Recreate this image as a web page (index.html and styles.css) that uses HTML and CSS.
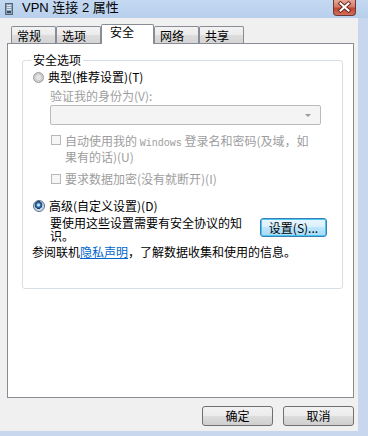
FILE: index.html
```html
<!DOCTYPE html>
<html lang="zh-CN">
<head>
<meta charset="utf-8">
<title>VPN 连接 2 属性</title>
<link rel="stylesheet" href="styles.css">
</head>
<body>
<div class="window">
  <div class="titlebar">
    <span class="appicon">
      <svg width="8" height="12" viewBox="0 0 8 12"><rect x="0.5" y="0.5" width="7" height="11" fill="#8fa3b8" stroke="#56677a"/><rect x="2" y="2" width="4" height="1" fill="#dfe8f1"/><rect x="2" y="4" width="4" height="1" fill="#dfe8f1"/><rect x="2" y="6" width="4" height="1" fill="#dfe8f1"/><rect x="2" y="8" width="4" height="2" fill="#3d4d5e"/></svg>
    </span>
    <span class="title">VPN 连接 2 属性</span>
    <span class="close">
      <svg width="23" height="16" viewBox="0 0 23 16"><path d="M7.5 4.5 L15.5 11.5 M15.5 4.5 L7.5 11.5" stroke="#6b2a22" stroke-width="4" stroke-linecap="square"/><path d="M7.5 4.5 L15.5 11.5 M15.5 4.5 L7.5 11.5" stroke="#ffffff" stroke-width="2" stroke-linecap="square"/></svg>
    </span>
  </div>
  <div class="client">
    <div class="tabs">
      <div class="tab">常规</div>
      <div class="tab">选项</div>
      <div class="tab active">安全</div>
      <div class="tab">网络</div>
      <div class="tab">共享</div>
    </div>
    <div class="panel">
      <fieldset class="group">
        <legend>安全选项</legend>
        <div class="opt first"><span class="radio"></span><span>典型(推荐设置)(T)</span></div>
        <div class="sub">
          <div class="lbl dis">验证我的身份为(V):</div>
          <div class="select"><span class="arrow"></span></div>
          <div class="chk dis c1"><span class="box"></span><span class="two">自动使用我的 <span class="mono">Windows</span> 登录名和密码(及域，如<br>果有的话)(U)</span></div>
          <div class="chk dis c2"><span class="box"></span><span>要求数据加密(没有就断开)(I)</span></div>
        </div>
        <div class="opt second"><span class="radio on"></span><span>高级(自定义设置)(D)</span></div>
        <div class="adv">
          <p class="advtext">要使用这些设置需要有安全协议的知<br>识。</p>
          <button class="btn focus">设置(S)...</button>
        </div>
        <p class="note">参阅联机<a class="link">隐私声明</a>，了解数据收集和使用的信息。</p>
      </fieldset>
    </div>
    <div class="buttons">
      <button class="btn std">确定</button>
      <button class="btn std">取消</button>
    </div>
  </div>
</div>
</body>
</html>
```

FILE: styles.css
```css
html, body {
  margin: 0;
  padding: 0;
}
body {
  width: 368px;
  height: 436px;
  overflow: hidden;
  font-family: "Noto Sans CJK SC", sans-serif;
  font-size: 12px;
  line-height: 12px;
  color: #000;
}
.window {
  width: 368px;
  height: 436px;
  background: #c9d7ee;
  display: flex;
  flex-direction: column;
}
.titlebar {
  height: 18px;
  flex: none;
  display: flex;
  align-items: flex-start;
  background: linear-gradient(#c4d9f1, #b8cfec);
}
.appicon {
  margin: 3px 0 0 5px;
  width: 8px;
  height: 12px;
  display: block;
}
.appicon svg, .close svg { display: block; }
.title {
  margin-left: 9px;
  font-family: "Liberation Sans", "Noto Sans CJK SC", sans-serif;
  font-size: 13px;
  line-height: 16px;
}
.close {
  margin-left: auto;
  margin-right: 12px;
  width: 23px;
  height: 16px;
  box-sizing: border-box;
  border: 1px solid #6b3a38;
  border-top: none;
  border-radius: 0 0 4px 4px;
  background: linear-gradient(#e8a596 0%, #d47a69 45%, #c2452f 55%, #d2705c 100%);
  overflow: hidden;
}
.close svg { margin: -1px 0 0 -1px; }
.client {
  flex: 1;
  margin: 0 10px 5px 0;
  background: #f0f0f0;
  display: flex;
  flex-direction: column;
}
.tabs {
  display: flex;
  align-items: flex-end;
  height: 19px;
  margin: 6px 0 0 11px;
}
.tab {
  box-sizing: border-box;
  width: 45px;
  height: 17px;
  border: 1px solid #898c95;
  border-bottom: none;
  border-radius: 2px 2px 0 0;
  background: linear-gradient(#f3f3f3 0%, #ebebeb 50%, #dddddd 50%, #d4d4d4 100%);
  line-height: 15px;
  padding: 1px 0 0 5px;
}
.tab.active {
  width: 53px;
  height: 20px;
  margin-bottom: -1px;
  background: #fff;
  position: relative;
  z-index: 1;
  line-height: 12px;
  padding: 1px 0 0 8px;
}
.panel {
  box-sizing: border-box;
  margin-left: 7px;
  width: 347px;
  height: 355px;
  border: 1px solid #898c95;
  background: #fff;
  padding-top: 10px;
}
.group {
  box-sizing: border-box;
  margin: 0 0 0 14px;
  width: 321px;
  border: 1px solid #d5dfe5;
  border-radius: 3px;
  padding: 5px 0 30px 10px;
  min-width: 0;
}
.group legend {
  padding: 0 2px;
  margin-left: -2px;
  line-height: 12px;
}
.opt {
  display: flex;
  align-items: center;
  gap: 4px;
  height: 12px;
}
.radio {
  box-sizing: border-box;
  width: 11px;
  height: 11px;
  border-radius: 50%;
  border: 1px solid #9a9a9a;
  background: radial-gradient(circle at 50% 50%, #e4e4e4 0 40%, #cfcfcf 41% 100%);
  flex: none;
}
.radio.on {
  width: 12px;
  height: 12px;
  border: 1px solid #5c6f86;
  background: radial-gradient(circle at 45% 40%, #c7e3f8 0 12%, #3378b5 25%, #173d66 45%, #bfcfdf 50%, #f3f6f9 100%);
}
.sub {
  padding-left: 17px;
}
.dis { color: #9d9d9d; }
.lbl {
  margin-top: 7px;
}
.select {
  box-sizing: border-box;
  margin-top: 3px;
  width: 271px;
  height: 20px;
  border: 1px solid #b9bcbf;
  border-radius: 2px;
  background: #f4f4f4;
  display: flex;
  justify-content: flex-end;
  align-items: center;
  padding-right: 9px;
}
.arrow {
  width: 0;
  height: 0;
  border-left: 3px solid transparent;
  border-right: 3px solid transparent;
  border-top: 3px solid #9a9a9a;
}
.chk {
  display: flex;
  align-items: flex-start;
  gap: 4px;
}
.chk.c1 { margin-top: 9px; }
.chk.c2 { margin-top: 10px; }
.two { line-height: 13px; }
.box {
  box-sizing: border-box;
  margin-left: 1px;
  margin-top: 1px;
  width: 10px;
  height: 10px;
  border: 1px solid #b8b8b8;
  background: #f6f6f6;
  flex: none;
}
.mono {
  font-family: "Liberation Mono", monospace;
  font-size: 10px;
}
.opt.second { margin-top: 15px; }
.adv {
  display: flex;
  align-items: flex-start;
  margin-top: 4px;
  padding-left: 17px;
}
.advtext {
  margin: 0;
  width: 200px;
  line-height: 13px;
}
.btn {
  box-sizing: border-box;
  font-family: "Noto Sans CJK SC", sans-serif;
  font-size: 12px;
  line-height: 12px;
  color: #000;
  padding: 0;
  border-radius: 3px;
}
.btn.focus {
  margin: 2px 0 0 10px;
  width: 67px;
  height: 19px;
  border: 1px solid #3c7fb1;
  background: linear-gradient(#eaf6fd 0%, #d9f0fc 50%, #bee6fd 50%, #a7d9f5 100%);
  box-shadow: inset 0 0 0 1px #48c6f5;
}
.note {
  margin: 4px 0 0 -1px;
}
.link {
  color: #0066cc;
  text-decoration: underline;
}
.buttons {
  display: flex;
  justify-content: flex-end;
  gap: 10px;
  margin: 8px 4px 0 0;
}
.btn.std {
  width: 71px;
  height: 20px;
  border: 1px solid #707070;
  background: linear-gradient(#f2f2f2 0%, #ebebeb 50%, #dddddd 50%, #cfcfcf 100%);
}
```
